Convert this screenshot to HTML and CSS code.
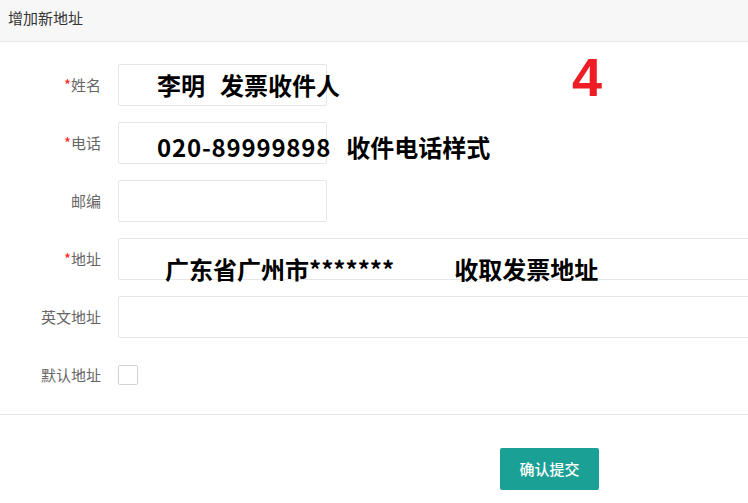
FILE: index.html
```
<!DOCTYPE html>
<html lang="zh-CN">

<head>
    <meta charset="UTF-8">
    <title>增加新地址</title>
    <link rel="stylesheet" href="styles.css">
</head>

<body>
    <div class="page">
        <div class="page_head">增加新地址</div>
        <form class="addr_form">
            <span class="step_no">4</span>
            <div class="row">
                <label class="row_label"><i>*</i>姓名</label>
                <div class="field field_short">
                    <span class="note note_name"><b>李明</b><b>发票收件人</b></span>
                </div>
            </div>
            <div class="row">
                <label class="row_label"><i>*</i>电话</label>
                <div class="field field_short">
                    <span class="note note_tel"><b class="num">020-89999898</b><b>收件电话样式</b></span>
                </div>
            </div>
            <div class="row">
                <label class="row_label">邮编</label>
                <div class="field field_short"></div>
            </div>
            <div class="row">
                <label class="row_label"><i>*</i>地址</label>
                <div class="field field_long">
                    <span class="note note_addr"><b>广东省广州市*******</b><b>收取发票地址</b></span>
                </div>
            </div>
            <div class="row">
                <label class="row_label">英文地址</label>
                <div class="field field_long"></div>
            </div>
            <div class="row">
                <label class="row_label">默认地址</label>
                <div class="check_wrap"><span class="check"></span></div>
            </div>
        </form>
        <div class="page_foot">
            <a href="javascript:;" class="btn_submit">确认提交</a>
        </div>
    </div>
</body>

</html>
```

FILE: styles.css
```
* {
    padding: 0;
    margin: 0;
    box-sizing: border-box;
}

body {
    font-family: "Noto Sans CJK SC", "Liberation Sans", sans-serif;
    font-size: 15px;
    color: #666;
    background-color: #fff;
    overflow: hidden;
}

.page {
    width: 748px;
}

.page_head {
    height: 42px;
    line-height: 36px;
    padding-left: 8px;
    background-color: #f7f7f7;
    border-bottom: 1px solid #e6e6e6;
    color: #333;
}

.addr_form {
    position: relative;
    padding-top: 22px;
    display: flex;
    flex-direction: column;
    gap: 16px;
    padding-bottom: 18px;
    border-bottom: 1px solid #e6e6e6;
}

/* 红色步骤编号 */
.step_no {
    position: absolute;
    left: 572px;
    top: 4px;
    font-family: "Liberation Sans", sans-serif;
    font-size: 54px;
    font-weight: bold;
    line-height: 62px;
    color: #ee1d25;
}

.row {
    display: grid;
    grid-template-columns: 101px 1fr;
    column-gap: 17px;
    align-items: center;
    height: 42px;
}

.row_label {
    text-align: right;
    line-height: 20px;
}

.row_label i {
    font-style: normal;
    color: #ff2020;
}

.field {
    position: relative;
    height: 42px;
    border: 1px solid #e6e6e6;
    border-radius: 2px;
}

.field_short {
    width: 209px;
}

.field_long {
    width: 660px;
}

/* 标注文字，叠在输入框上 */
.note {
    position: absolute;
    display: flex;
    white-space: nowrap;
    font-size: 24px;
    line-height: 30px;
    color: #000;
}

.note b {
    font-weight: bold;
}

.note_name {
    left: 38px;
    top: 5px;
    gap: 15px;
}

.note_tel {
    left: 38px;
    top: 9px;
    gap: 15px;
}

.note_tel .num {
    letter-spacing: 0.8px;
}

.note_addr {
    left: 46px;
    top: 15px;
    gap: 60px;
}

.check_wrap {
    display: flex;
    align-items: center;
}

.check {
    width: 20px;
    height: 20px;
    border: 1px solid #d2d2d2;
    border-radius: 2px;
}

.page_foot {
    padding: 33px 0 0 500px;
}

.btn_submit {
    display: block;
    width: 99px;
    height: 42px;
    line-height: 42px;
    text-align: center;
    background-color: #1aa094;
    border-radius: 2px;
    color: #fff;
    font-size: 15px;
    font-weight: 500;
    text-decoration: none;
}
```
